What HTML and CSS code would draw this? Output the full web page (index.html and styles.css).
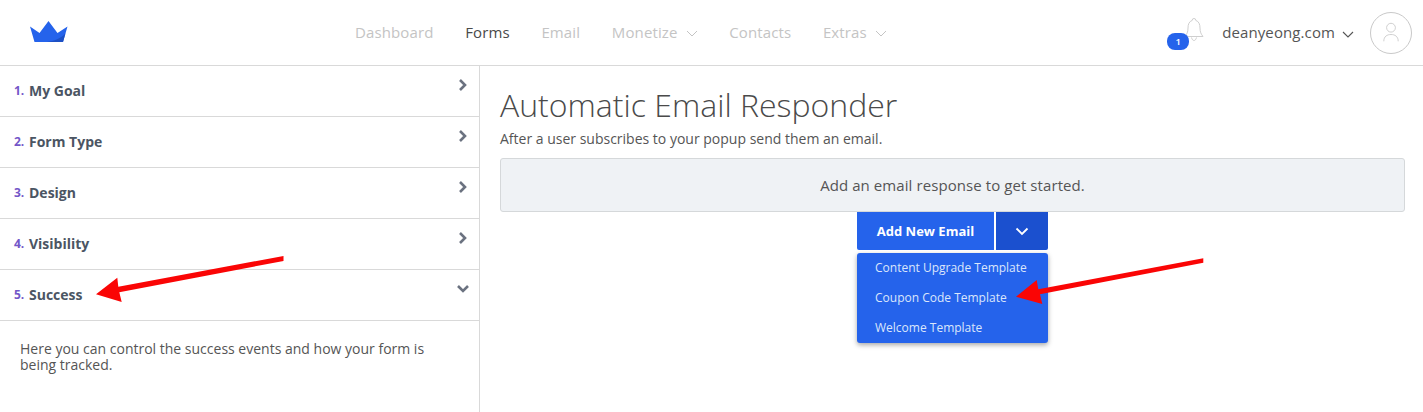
FILE: index.html
```html
<!DOCTYPE html>
<html lang="en">
<head>
<meta charset="utf-8">
<title>Automatic Email Responder</title>
<link rel="stylesheet" href="styles.css">
</head>
<body>
<header class="topbar">
  <svg class="logo" width="38" height="22" viewBox="0 0 38 22"><path fill="#2563eb" d="M0 5.5 9.5 12 18.5 0 27.500 12 37.500 5.500 33 21H4.500Z"/><path fill="#1d50c4" d="M33 21H17C24 20 31 17.500 35.400 12.500Z"/></svg>
  <nav class="nav">
    <a class="nav-link">Dashboard</a>
    <a class="nav-link active">Forms</a>
    <a class="nav-link">Email</a>
    <a class="nav-link">Monetize <svg class="caret" width="12" height="7" viewBox="0 0 12 7"><path d="M1 1l5 5 5-5" fill="none" stroke="currentColor"/></svg></a>
    <a class="nav-link">Contacts</a>
    <a class="nav-link">Extras <svg class="caret" width="12" height="7" viewBox="0 0 12 7"><path d="M1 1l5 5 5-5" fill="none" stroke="currentColor"/></svg></a>
  </nav>
  <div class="account">
    <div class="bell-wrap">
      <svg class="bell" width="20" height="28" viewBox="0 0 20 28"><path d="M10 2.500a1.800 1.800 0 0 1 1.800 1.900C15 5.500 16 8.500 16 12c0 4 1 6 3 8.500H1C3 18 4 16 4 12c0-3.500 1-6.500 4.200-7.600A1.800 1.800 0 0 1 10 2.500ZM7.500 21.500c.5 2 1.500 3 2.500 3s2-1 2.500-3" fill="none" stroke="#cfcfcf"/></svg>
      <span class="badge">1</span>
    </div>
    <span class="site">deanyeong.com</span>
    <svg class="site-caret" width="12" height="7" viewBox="0 0 12 7"><path d="M1 1l5 5 5-5" fill="none" stroke="#555" stroke-width="1.100"/></svg>
    <div class="avatar"><svg width="20" height="26" viewBox="0 0 20 26"><circle cx="10" cy="7" r="5.500" fill="none" stroke="#c4c4c4"/><path d="M1 24c0-6 4-8.500 9-8.500s9 2.500 9 8.500" fill="none" stroke="#c4c4c4"/></svg></div>
  </div>
</header>
<div class="layout">
  <aside class="sidebar">
    <div class="step"><span class="num">1.</span><span class="label">My Goal</span><svg class="chev" width="10" height="14" viewBox="0 0 10 14"><path d="M2 2l5 5-5 5" fill="none" stroke="#6b7280" stroke-width="2.600"/></svg></div>
    <div class="step"><span class="num">2.</span><span class="label">Form Type</span><svg class="chev" width="10" height="14" viewBox="0 0 10 14"><path d="M2 2l5 5-5 5" fill="none" stroke="#6b7280" stroke-width="2.600"/></svg></div>
    <div class="step"><span class="num">3.</span><span class="label">Design</span><svg class="chev" width="10" height="14" viewBox="0 0 10 14"><path d="M2 2l5 5-5 5" fill="none" stroke="#6b7280" stroke-width="2.600"/></svg></div>
    <div class="step"><span class="num">4.</span><span class="label">Visibility</span><svg class="chev" width="10" height="14" viewBox="0 0 10 14"><path d="M2 2l5 5-5 5" fill="none" stroke="#6b7280" stroke-width="2.600"/></svg></div>
    <div class="step"><span class="num">5.</span><span class="label">Success</span><svg class="chev-down" width="14" height="10" viewBox="0 0 14 10"><path d="M2 2l5 5 5-5" fill="none" stroke="#6b7280" stroke-width="2.600"/></svg></div>
    <p class="step-body">Here you can control the success events and how your form is being tracked.</p>
  </aside>
  <main class="content">
    <h1 class="title">Automatic Email Responder</h1>
    <p class="subtitle">After a user subscribes to your popup send them an email.</p>
    <div class="notice">Add an email response to get started.</div>
    <div class="actions">
      <div class="btn-group">
        <button class="btn-main">Add New Email</button>
        <button class="btn-toggle"><svg width="14" height="9" viewBox="0 0 14 9"><path d="M1.500 1.500 7 7l5.500-5.500" fill="none" stroke="#fff" stroke-width="1.800"/></svg></button>
      </div>
      <ul class="menu">
        <li>Content Upgrade Template</li>
        <li>Coupon Code Template</li>
        <li>Welcome Template</li>
      </ul>
    </div>
  </main>
</div>
<svg class="annotations" width="1423" height="412" viewBox="0 0 1423 412">
  <path fill="#fa0505" d="M283.500 256 118.300 286.700 117.300 277.700 96 294.300 121.700 302 119.300 292.300 283.500 261Z"/>
  <path fill="#fa0505" d="M1203.300 258.300 1038.300 289.300 1036.700 280 1016 296.700 1042.300 304 1040 294.300 1203.300 262.700Z"/>
</svg>
</body>
</html>
```

FILE: styles.css
```css
* { box-sizing: border-box; }
html, body { margin: 0; height: 412px; overflow: hidden; }
body { font-family: "Open Sans", sans-serif; color: #4b5563; background: #fff; position: relative; }

.topbar { height: 66px; border-bottom: 1px solid #d9d9d9; display: flex; align-items: center; position: relative; }
.logo { margin: 0 0 0 30px; position: relative; top: -1px; }
.nav { display: flex; gap: 31.700px; margin: 0 0 2px 287px; font-size: 15px; letter-spacing: .12px; color: #c4c4c4; }
.nav-link { display: flex; align-items: center; gap: 4px; white-space: pre; }
.nav-link.active { color: #4a4a4a; }
.caret { margin-top: 3px; }

.account { margin-left: auto; display: flex; align-items: center; }
.bell-wrap { width: 34px; height: 34px; position: relative; margin-right: 21px; }
.bell { position: absolute; left: 17px; top: 0; }
.badge { position: absolute; left: 0; top: 17px; width: 22px; height: 17px; border-radius: 8px; background: #2563eb; color: #fff; font-size: 9.500px; font-weight: 600; text-align: center; line-height: 17px; }
.site { font-size: 15px; letter-spacing: .1px; color: #555; margin-bottom: 2px; }
.site-caret { margin: 3px 0 0 7px; }
.avatar { width: 42px; height: 42px; margin: 0 11px 0 16px; border: 1px solid #c9c9c9; border-radius: 50%; display: flex; align-items: center; justify-content: center; }
.avatar svg { width: 16px; height: 21px; }

.layout { display: flex; height: 346px; }
.sidebar { width: 480px; border-right: 1px solid #d9d9d9; flex: none; }
.step { height: 51px; border-bottom: 1px solid #d9d9d9; display: flex; align-items: center; padding: 0 10px 2px 14px; font-weight: 700; font-size: 14px; }
.num { color: #7357c8; font-size: 12px; width: 15px; font-weight: 700; }
.label { color: #4b5563; }
.chev { margin-left: auto; margin-right: 1px; position: relative; top: -5px; }
.chev-down { margin-left: auto; margin-right: -1px; position: relative; top: -5px; }
.step-body { margin: 20px 20px 0; font-size: 14px; line-height: 16px; color: #555; }

.content { flex: 1; padding: 0 18px 0 20px; }
.title { margin: 17px 0 0; font-size: 32px; line-height: 44px; font-weight: 300; color: #4a4a4a; }
.subtitle { margin: 2px 0 0; font-size: 14px; line-height: 19px; color: #555; }
.notice { margin-top: 10px; height: 54px; background: #eff2f5; border: 1px solid #d5d8da; border-radius: 3px; display: flex; align-items: center; justify-content: center; font-size: 15px; letter-spacing: .08px; color: #555; }

.actions { width: 191px; margin: 0 auto; position: relative; }
.btn-group { display: flex; gap: 2px; height: 38px; }
.btn-main, .btn-toggle { border: 0; color: #fff; font-family: inherit; padding: 0; }
.btn-main { width: 137px; background: #2563eb; font-weight: 700; font-size: 13px; border-radius: 0 0 0 2px; }
.btn-toggle { flex: 1; background: #1b50cf; border-radius: 0 0 2px 0; display: flex; align-items: center; justify-content: center; }
.menu { list-style: none; margin: 3px 0 0; padding: 0 0 0 18px; height: 90px; background: #2563eb; border-radius: 3px; box-shadow: 0 2px 5px rgba(0,0,0,.35); color: #dbe6fb; font-size: 12px; }
.menu li { height: 30px; line-height: 30px; }

.annotations { position: absolute; left: 0; top: 0; pointer-events: none; }
```
